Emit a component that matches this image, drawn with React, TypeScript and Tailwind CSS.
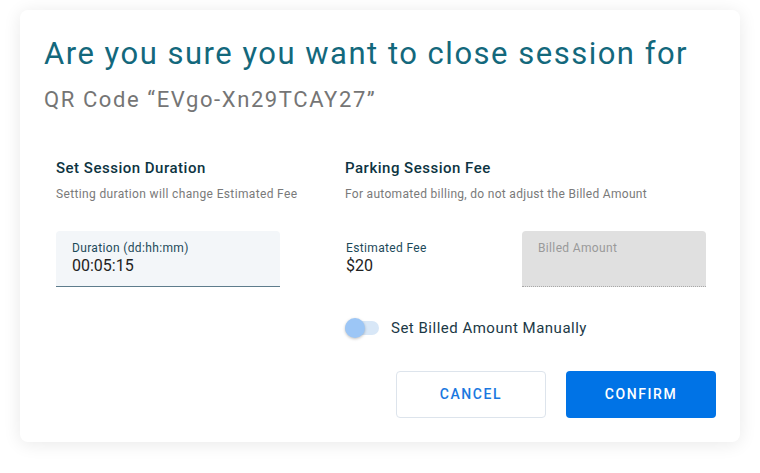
import React from "react";

export default function App() {
  return (
    <div className="w-[760px] h-[473px] bg-white" style={{ fontFamily: "Roboto, 'Liberation Sans', sans-serif" }}>
      <div className="pt-[10px] pl-[20px]">
        <div className="w-[720px] h-[432px] rounded-lg bg-white shadow-[0_2px_18px_rgba(0,0,0,0.09)] px-6 pt-6">
          <h1 className="text-[31px] leading-[40px] tracking-[1.5px] text-[#13687c] font-normal whitespace-nowrap">
            Are you sure you want to close session for
          </h1>
          <p className="mt-3 text-[22px] leading-[28px] tracking-[1.6px] text-[#757575]">QR Code “EVgo-Xn29TCAY27”</p>

          <div className="px-3 mt-[44px] flex">
            <div className="w-[224px]">
              <h2 className="text-[15px] leading-[20px] font-medium tracking-[0.5px] text-[#0d3442] whitespace-nowrap">Set Session Duration</h2>
              <p className="mt-2 text-[12px] leading-[16px] text-[#7a7a7a] tracking-[0.35px] whitespace-nowrap">
                Setting duration will change Estimated Fee
              </p>
              <div className="mt-[29px] h-[56px] rounded-t bg-[#f3f6f9] border-b border-[#5e7c8c] px-4 pt-[9px]">
                <div className="text-[12px] leading-[16px] tracking-[0.35px] text-[#1d4a5a]">Duration (dd:hh:mm)</div>
                <div className="text-[16px] leading-[20px] text-[#222]">00:05:15</div>
              </div>
            </div>

            <div className="ml-[65px] w-[361px]">
              <h2 className="text-[15px] leading-[20px] font-medium tracking-[0.5px] text-[#0d3442] whitespace-nowrap">Parking Session Fee</h2>
              <p className="mt-2 text-[12px] leading-[16px] text-[#7a7a7a] tracking-[0.3px] whitespace-nowrap">
                For automated billing, do not adjust the Billed Amount
              </p>
              <div className="mt-[29px] flex">
                <div className="w-[177px] pt-[9px] pl-px">
                  <div className="text-[12px] leading-[16px] tracking-[0.35px] text-[#1d4a5a]">Estimated Fee</div>
                  <div className="text-[16px] leading-[20px] text-[#222]">$20</div>
                </div>
                <div className="w-[184px] h-[56px] rounded-t bg-[#e0e0e0] border-b border-dotted border-[#a8a8a8] px-4 pt-[9px]">
                  <div className="text-[12px] leading-[16px] tracking-[0.35px] text-[#9a9a9a]">Billed Amount</div>
                </div>
              </div>
              <div className="mt-[31px] flex items-center h-5">
                <div className="relative w-[34px] h-5 flex items-center">
                  <div className="absolute left-0 w-[34px] h-[14px] rounded-full bg-[#d8e7f7]" />
                  <div className="absolute left-0 top-0 w-5 h-5 rounded-full bg-[#9cc6f6] shadow-[0_1px_3px_rgba(0,0,0,0.25)]" />
                </div>
                <span className="ml-[12px] text-[15px] leading-[20px] tracking-[0.5px] text-[#1b3946] whitespace-nowrap">Set Billed Amount Manually</span>
              </div>
            </div>
          </div>

          <div className="mt-[33px] flex justify-end gap-5">
            <button className="w-[150px] h-[47px] rounded border border-[#dde4ec] bg-white text-[14px] font-medium tracking-[1.6px] text-[#1a78e0]">
              CANCEL
            </button>
            <button className="w-[150px] h-[47px] rounded bg-[#0073e6] text-[14px] font-medium tracking-[1.6px] text-white">
              CONFIRM
            </button>
          </div>
        </div>
      </div>
    </div>
  );
}
